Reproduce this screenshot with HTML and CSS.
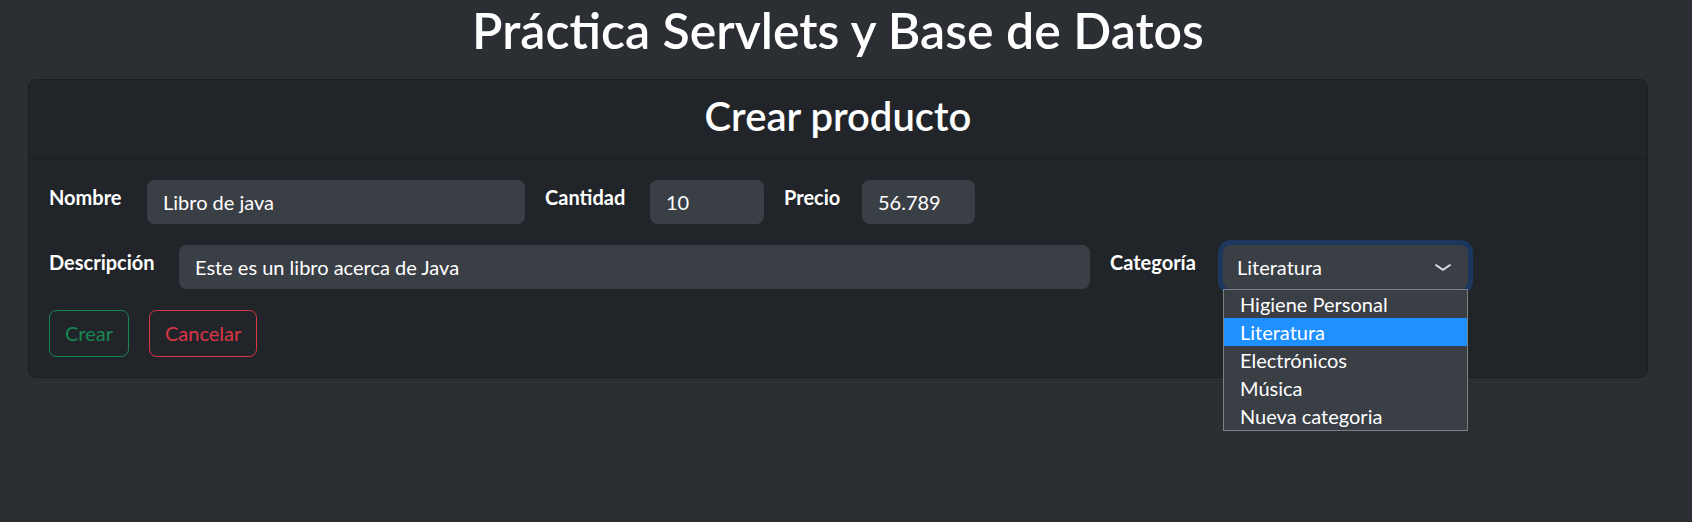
FILE: index.html
```html
<!DOCTYPE html>
<html lang="es">
<head>
<meta charset="utf-8">
<title>Práctica Servlets y Base de Datos</title>
<link rel="stylesheet" href="styles.css">
</head>
<body>
<div class="page">
  <h1 class="title">Práctica Servlets y Base de Datos</h1>
  <div class="card">
    <div class="card-header"><h2>Crear producto</h2></div>
    <div class="card-body">
      <div class="form-row">
        <label class="lbl lbl-nombre">Nombre</label>
        <input class="field f-nombre" type="text" value="Libro de java">
        <label class="lbl lbl-cant">Cantidad</label>
        <input class="field f-cant" type="text" value="10">
        <label class="lbl lbl-precio">Precio</label>
        <input class="field f-precio" type="text" value="56.789">
      </div>
      <div class="form-row">
        <label class="lbl lbl-desc">Descripción</label>
        <input class="field f-desc" type="text" value="Este es un libro acerca de Java">
        <label class="lbl lbl-cat">Categoría</label>
        <div class="select-wrap">
          <div class="select">
            <span>Literatura</span>
            <svg class="chev" width="20" height="15" viewBox="0 0 16 16" preserveAspectRatio="none"><path d="m2.5 5.5 5.5 5 5.5-5" fill="none" stroke="#dee2e6" stroke-width="1.8" stroke-linecap="round" stroke-linejoin="round"/></svg>
          </div>
          <ul class="dropdown">
            <li>Higiene Personal</li>
            <li class="sel">Literatura</li>
            <li>Electrónicos</li>
            <li>Música</li>
            <li>Nueva categoria</li>
          </ul>
        </div>
      </div>
      <div class="actions">
        <button class="btn btn-success">Crear</button>
        <button class="btn btn-danger">Cancelar</button>
      </div>
    </div>
  </div>
</div>
</body>
</html>
```
FILE: styles.css
```css
* { box-sizing: border-box; }
html, body { margin: 0; min-height: 100%; }
html { height: 100%; background: #2b2e33; }
body {
  background: #2b2e33;
  color: #fff;
  font-family: "Lato", "Noto Sans", sans-serif;
  font-size: 20px;
  line-height: 1.5;
}
.page { width: 1676px; min-height: 522px; padding: 0 28px; }
.title {
  margin: 0 0 19px;
  font-size: 50px;
  line-height: 60px;
  font-weight: 600;
  text-align: center;
}
.card {
  background: #212529;
  border: 1px solid #1b1e22;
  border-radius: 8px;
}
.card-header {
  padding: 12px 20px 8px;
  border-bottom: 1px solid #1b1e22;
  text-align: center;
}
.card-header h2 {
  margin: 0 0 10px;
  font-size: 40px;
  line-height: 48px;
  font-weight: 600;
}
.card-body { padding: 21px 20px 20px; }
.form-row {
  display: flex;
  gap: 20px;
  align-items: flex-start;
  margin-bottom: 21px;
}
.lbl {
  font-weight: 700;
  line-height: 30px;
  padding-top: 2px;
  white-space: nowrap;
}
.lbl-nombre { width: 78px; }
.lbl-cant { width: 85px; }
.lbl-precio { width: 58px; }
.lbl-desc { width: 110px; }
.lbl-cat { width: 93px; }
.field {
  height: 44px;
  border: 0;
  border-radius: 7.5px;
  background: #3a3e45;
  color: #fff;
  font: inherit;
  padding: 0 16px;
  outline: none;
}
.f-nombre { width: 378px; }
.f-cant { width: 114px; }
.f-precio { width: 113px; }
.f-desc { width: 911px; }
.select-wrap { position: relative; z-index: 5; width: 245px; }
.select {
  height: 44px;
  display: flex;
  align-items: center;
  justify-content: space-between;
  padding: 0 15px 0 14px;
  background: #3a3e45;
  border-radius: 7.5px;
  box-shadow: 0 0 0 5px #1c375e;
}
.chev { display: block; }
.dropdown {
  position: absolute;
  top: 100%;
  left: 0;
  width: 245px;
  margin: 0;
  padding: 0;
  list-style: none;
  background: #3a3e45;
  border: 1px solid #7d7f82;
  z-index: 5;
}
.dropdown li {
  height: 28px;
  line-height: 28px;
  padding-left: 16px;
  color: #fff;
}
.dropdown li.sel { background: #1e90ff; }
.actions { display: flex; gap: 20px; }
.btn {
  height: 47px;
  padding: 0 15px;
  border: 1px solid;
  border-radius: 7.5px;
  background: transparent;
  font: inherit;
  line-height: 45px;
}
.btn-success { color: #198754; border-color: #198754; }
.btn-danger { color: #dc3545; border-color: #dc3545; }
```
